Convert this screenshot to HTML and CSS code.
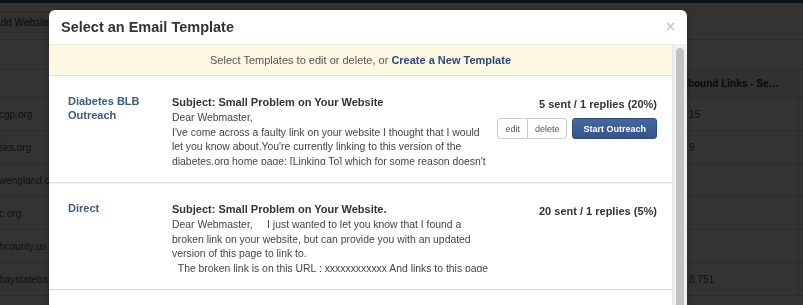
FILE: index.html
```html
<!DOCTYPE html>
<html lang="en">
<head>
  <meta charset="UTF-8">
  <meta name="viewport" content="width=device-width, initial-scale=1.0">
  <title>Outreach - Websites</title>
  <link rel="stylesheet" href="styles.css">
</head>
<body>
  <div class="navbar"></div>

  <div class="page">
    <div class="toolbar">
      <button class="btn-add">Add Websites</button>
    </div>
    <div class="filters"></div>

    <div class="site-head">
      <div class="site-name"></div>
      <div class="site-links">Inbound Links - Search</div>
      <div class="site-extra"></div>
    </div>
    <div class="site-row">
      <div class="site-name">cgp.org</div>
      <div class="site-links num">15</div>
      <div class="site-extra"></div>
    </div>
    <div class="site-row">
      <div class="site-name">sks.org</div>
      <div class="site-links num">9</div>
      <div class="site-extra"></div>
    </div>
    <div class="site-row">
      <div class="site-name">wengland.com</div>
      <div class="site-links num"></div>
      <div class="site-extra"></div>
    </div>
    <div class="site-row">
      <div class="site-name">c.org</div>
      <div class="site-links num"></div>
      <div class="site-extra"></div>
    </div>
    <div class="site-row">
      <div class="site-name">hcounty.us</div>
      <div class="site-links num"></div>
      <div class="site-extra"></div>
    </div>
    <div class="site-row">
      <div class="site-name">baystatebanner.com</div>
      <div class="site-links num">8,751</div>
      <div class="site-extra"></div>
    </div>
  </div>

  <!-- modal over the page -->
  <div class="backdrop"></div>
  <div class="modal">
    <div class="modal-header">
      <h3>Select an Email Template</h3>
      <span class="close">&times;</span>
    </div>

    <div class="modal-body">
      <div class="modal-scroll">
        <div class="notice">Select Templates to edit or delete, or <a href="#">Create a New Template</a></div>

        <div class="tpl">
          <div class="tpl-name">Diabetes BLB Outreach</div>
          <div class="tpl-main">
            <div class="tpl-subject">Subject: Small Problem on Your Website</div>
            <div class="tpl-body">Dear Webmaster,
I've come across a faulty link on your website I thought that I would let you know about.You're currently linking to this version of the diabetes.org home page: [Linking To] which for some reason doesn't work any more. You might want to update it.</div>
          </div>
          <div class="tpl-side">
            <div class="tpl-stats">5 sent / 1 replies (20%)</div>
            <div class="tpl-actions">
              <div class="btn-group">
                <button class="btn">edit</button>
                <button class="btn">delete</button>
              </div>
              <button class="btn btn-primary">Start Outreach</button>
            </div>
          </div>
        </div>

        <div class="tpl">
          <div class="tpl-name">Direct</div>
          <div class="tpl-main">
            <div class="tpl-subject">Subject: Small Problem on Your Website.</div>
            <div class="tpl-body">Dear Webmaster,     I just wanted to let you know that I found a broken link on your website, but can provide you with an updated version of this page to link to.
  The broken link is on this URL : xxxxxxxxxxxx And links to this page which no longer exists.</div>
          </div>
          <div class="tpl-side">
            <div class="tpl-stats">20 sent / 1 replies (5%)</div>
          </div>
        </div>

        <div class="tpl">
          <div class="tpl-name">Resource Page</div>
          <div class="tpl-main">
            <div class="tpl-subject">Subject: A resource for your readers</div>
            <div class="tpl-body">Hi there,
I came across your resources page and thought you might like this.</div>
          </div>
          <div class="tpl-side">
            <div class="tpl-stats">3 sent / 0 replies (0%)</div>
          </div>
        </div>
      </div>

      <div class="scrollbar">
        <div class="scrollbar-thumb"></div>
      </div>
    </div>
  </div>
</body>
</html>
```

FILE: styles.css
```css
body {
  margin: 0;
  font-family: "Liberation Sans", Helvetica, Arial, sans-serif;
  font-size: 10px;
  color: #555;
  background: #fff;
  overflow: hidden;
}

/* page under the modal */
.navbar {
  height: 3px;
  background: #3d5670;
}

.page {
  margin-left: -17px;
  width: 896px;
}

.toolbar {
  height: 37px;
  padding-top: 8px;
  box-sizing: border-box;
  border-bottom: 1px solid #ddd;
}

.btn-add {
  height: 22px;
  padding: 0 10px;
  font: inherit;
  color: #333;
  background: #f5f5f5;
  border: 1px solid #ccc;
  border-radius: 3px;
}

.filters {
  height: 30px;
  box-sizing: border-box;
  border-bottom: 1px solid #ddd;
}

.site-head,
.site-row {
  display: flex;
  align-items: center;
  box-sizing: border-box;
  border-bottom: 1px solid #ddd;
}

.site-head {
  height: 28px;
}

.site-row {
  height: 33px;
}

.site-name {
  flex: 1;
  padding-left: 16px;
  color: #555;
}

.site-links {
  width: 127px;
  height: 100%;
  display: flex;
  align-items: center;
  box-sizing: border-box;
  padding-left: 7px;
  border-right: 1px solid #ddd;
  white-space: nowrap;
  overflow: hidden;
}

.site-head .site-links {
  display: block;
  line-height: 28px;
  padding-right: 16px;
  font-weight: bold;
  color: #333;
  background: #f2f2f2;
  text-overflow: ellipsis;
}

.site-links.num {
  padding-left: 17px;
}

.site-extra {
  width: 80px;
}

/* modal */
.backdrop {
  position: fixed;
  top: 0;
  left: 0;
  right: 0;
  bottom: 0;
  background: rgba(0, 0, 0, 0.8);
}

.modal {
  position: fixed;
  left: 49px;
  top: 10px;
  width: 638px;
  height: 390px;
  display: flex;
  flex-direction: column;
  background: #fff;
  border-radius: 6px;
  box-shadow: 0 3px 7px rgba(0, 0, 0, 0.3);
  overflow: hidden;
}

.modal-header {
  height: 35px;
  box-sizing: border-box;
  padding: 0 12px;
  display: flex;
  align-items: center;
  justify-content: space-between;
  border-bottom: 1px solid #eee;
}

.modal-header h3 {
  margin: 0;
  font-size: 14.5px;
  color: #333;
}

.close {
  font-size: 16px;
  font-weight: bold;
  line-height: 1;
  color: #000;
  opacity: 0.2;
}

.modal-body {
  flex: 1;
  display: flex;
  min-height: 0;
}

.modal-scroll {
  flex: 1;
  overflow: hidden;
}

.scrollbar {
  width: 15px;
  box-sizing: border-box;
  padding: 3px 3px 0 3px;
  background: #f1f1f1;
  border-left: 1px solid #e4e4e4;
}

.scrollbar-thumb {
  height: 300px;
  background: #c2c2c2;
  border-radius: 4px;
}

.notice {
  padding: 8px 0 7px;
  line-height: 15px;
  font-size: 11px;
  text-align: center;
  color: #555;
  background: #fcf8e3;
  border-bottom: 1px solid #e4dec0;
}

.notice a {
  color: #2f4b70;
  font-weight: bold;
  text-decoration: none;
}

.tpl {
  display: grid;
  grid-template-columns: 104px 320px 1fr;
  padding: 18px 15px 17px 19px;
  border-bottom: 1px solid #ddd;
  box-shadow: 0 1px 1px rgba(0, 0, 0, 0.04);
}

.tpl-name {
  font-size: 11px;
  font-weight: bold;
  line-height: 14px;
  color: #3b5a80;
  padding-right: 20px;
}

.tpl-subject {
  font-size: 11px;
  font-weight: bold;
  line-height: 16px;
  color: #333;
  margin-bottom: 1px;
}

.tpl-body {
  height: 54px;
  overflow: hidden;
  white-space: pre-wrap;
  font-size: 10.4px;
  line-height: 14.5px;
  color: #444;
}

.tpl-side {
  text-align: right;
}

.tpl-stats {
  margin-top: 2px;
  font-size: 11px;
  font-weight: bold;
  line-height: 16px;
  color: #333;
}

.tpl-actions {
  display: flex;
  justify-content: flex-end;
  gap: 5px;
  margin-top: 6px;
}

.btn-group {
  display: flex;
}

.btn {
  height: 21px;
  padding: 0 7px;
  font: inherit;
  font-size: 9px;
  color: #555;
  background: #fff;
  border: 1px solid #ccc;
}

.btn-group .btn:first-child {
  border-radius: 3px 0 0 3px;
}

.btn-group .btn:last-child {
  margin-left: -1px;
  border-radius: 0 3px 3px 0;
}

.btn-primary {
  padding: 0 10px;
  font-weight: bold;
  color: #fff;
  background: linear-gradient(#4768a0, #34548a);
  border-color: #2e4a76;
  border-radius: 3px;
}
```
